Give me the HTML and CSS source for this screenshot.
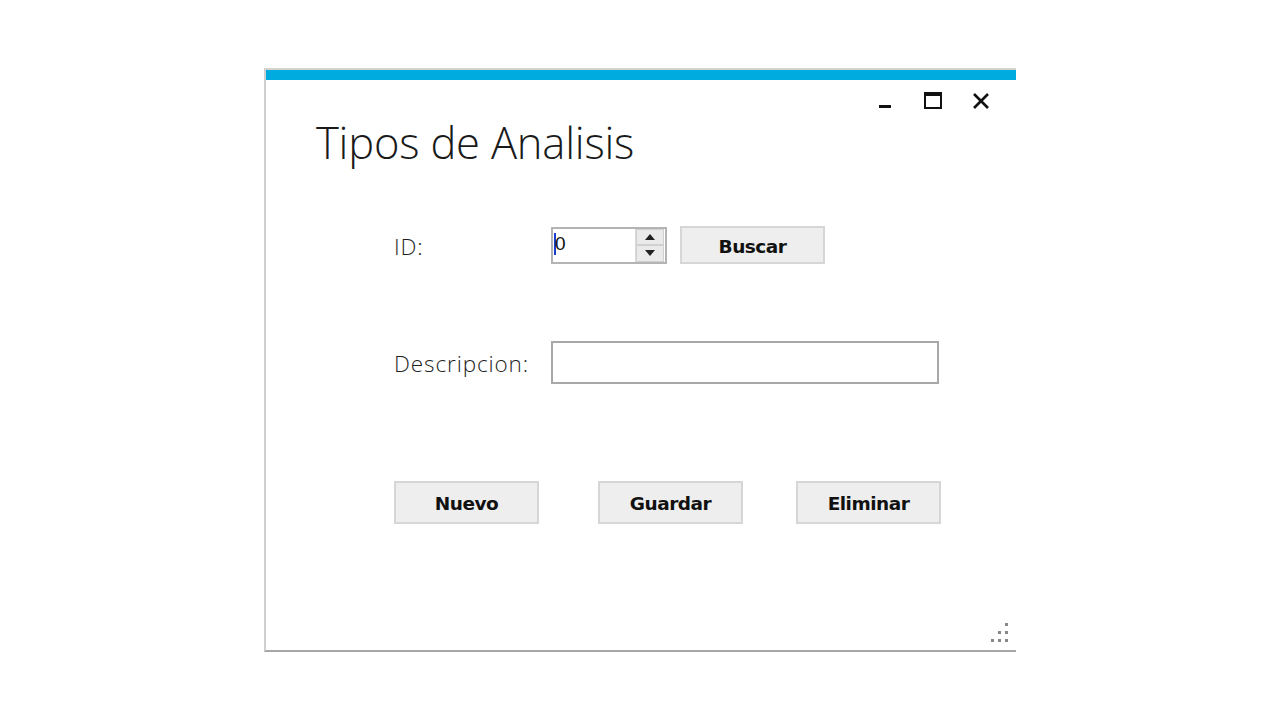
FILE: index.html
```html
<!DOCTYPE html>
<html lang="es">
<head>
<meta charset="utf-8">
<title>Tipos de Analisis</title>
<link rel="stylesheet" href="styles.css">
</head>
<body>
<div class="window">
  <div class="accent"></div>
  <div class="controls">
    <span class="ctl ctl-min"><svg width="14" height="18" viewBox="0 0 14 18"><rect x="1" y="13" width="12" height="3" fill="#111"/></svg></span>
    <span class="ctl ctl-max"><svg width="18" height="18" viewBox="0 0 18 18"><rect x="1" y="1" width="16" height="15" fill="none" stroke="#111" stroke-width="2"/><rect x="1" y="1" width="16" height="3" fill="#111"/></svg></span>
    <span class="ctl ctl-close"><svg width="18" height="18" viewBox="0 0 18 18"><path d="M2 2 L16 16 M16 2 L2 16" stroke="#111" stroke-width="2.6" fill="none"/></svg></span>
  </div>
  <h1 class="title">Tipos de Analisis</h1>
  <div class="form">
    <div class="row row-id">
      <label class="label">ID:</label>
      <div class="spin">
        <div class="spin-text"><span class="caret"></span>0</div>
        <div class="spin-btns">
          <div class="spin-btn"><svg width="10" height="6" viewBox="0 0 10 6"><path d="M0 6 L5 0 L10 6Z" fill="#222"/></svg></div>
          <div class="spin-btn"><svg width="10" height="6" viewBox="0 0 10 6"><path d="M0 0 L5 6 L10 0Z" fill="#222"/></svg></div>
        </div>
      </div>
      <button class="btn btn-buscar">Buscar</button>
    </div>
    <div class="row row-desc">
      <label class="label">Descripcion:</label>
      <div class="textbox"></div>
    </div>
    <div class="row row-actions">
      <button class="btn btn-act">Nuevo</button>
      <button class="btn btn-act">Guardar</button>
      <button class="btn btn-act">Eliminar</button>
    </div>
  </div>
  <div class="footer">
    <svg class="grip" width="18" height="19" viewBox="0 0 18 19">
      <rect x="14" y="0" width="3" height="3" fill="#888"/>
      <rect x="7" y="8" width="3" height="3" fill="#888"/>
      <rect x="14" y="8" width="3" height="3" fill="#888"/>
      <rect x="0" y="16" width="3" height="3" fill="#888"/>
      <rect x="7" y="16" width="3" height="3" fill="#888"/>
      <rect x="14" y="16" width="3" height="3" fill="#888"/>
    </svg>
  </div>
</div>
</body>
</html>
```
FILE: styles.css
```css
html, body {
  margin: 0;
  padding: 0;
  background: #ffffff;
}
body {
  width: 1280px;
  height: 720px;
  overflow: hidden;
  font-family: "Open Sans", "Noto Sans", sans-serif;
}
.window {
  margin: 68px 0 0 264px;
  width: 752px;
  height: 584px;
  box-sizing: border-box;
  border-top: 2px solid #d6d2d0;
  border-left: 2px solid #cfcfcf;
  border-bottom: 2px solid #a6a6a6;
  background: #ffffff;
  display: flex;
  flex-direction: column;
}
.accent {
  height: 10px;
  background: #00abdf;
  flex: none;
}
.controls {
  height: 30px;
  display: flex;
  justify-content: flex-end;
  align-items: flex-end;
  gap: 30px;
  padding-right: 26px;
  flex: none;
}
.ctl {
  display: flex;
  align-items: flex-end;
  height: 18px;
}
.ctl svg { display: block; }
.ctl-min { margin-right: 2px; }
.title {
  margin: 3px 0 0 50px;
  font-weight: 300;
  font-size: 43.5px;
  line-height: 60px;
  color: #1a1a1a;
  letter-spacing: -0.2px;
}
.form {
  padding-left: 128px;
  display: flex;
  flex-direction: column;
}
.row {
  display: flex;
  align-items: center;
}
.row-id { margin-top: 53px; height: 38px; }
.row-desc { margin-top: 77px; height: 43px; }
.row-actions { margin-top: 97px; height: 43px; }
.label {
  width: 157px;
  font-size: 22.5px;
  font-weight: 300;
  color: #1e1e1e;
  letter-spacing: 0.9px;
  margin-top: 2px;
}
.spin {
  width: 116px;
  height: 37px;
  box-sizing: border-box;
  border: 2px solid #b4b4b4;
  display: flex;
  background: #fff;
}
.spin-text {
  flex: 1;
  font-family: "Liberation Sans", Arial, sans-serif;
  font-size: 19px;
  line-height: 22px;
  padding: 4px 0 0 1px;
  color: #111;
  display: flex;
  align-items: flex-start;
}
.caret {
  width: 2px;
  height: 22px;
  background: #1a3fd0;
  margin-right: -1px;
}
.spin-btns {
  width: 28px;
  display: flex;
  flex-direction: column;
  margin: 0 1px 0 0;
  border-left: 1px solid #dadada;
}
.spin-btn {
  flex: 1;
  display: flex;
  align-items: center;
  justify-content: center;
  background: #eaeaea;
  border: 1px solid #d0d0d0;
}
.btn {
  box-sizing: border-box;
  height: 38px;
  width: 145px;
  background: #eeeeee;
  border: 2px solid #d6d6d6;
  font-family: "DejaVu Sans", "Liberation Sans", sans-serif;
  font-weight: bold;
  font-size: 18.5px;
  color: #111;
  padding: 3px 0 0 0;
  letter-spacing: -0.5px;
}
.btn-buscar { margin-left: 13px; }
.textbox {
  width: 388px;
  height: 43px;
  box-sizing: border-box;
  border: 2px solid #a8a8a8;
  background: #fff;
}
.btn-act {
  height: 43px;
  width: 145px;
  padding-top: 2px;
}
.btn-act:nth-child(2) { margin-left: 59px; }
.btn-act:nth-child(3) { margin-left: 53px; }
.footer {
  flex: 1;
  display: flex;
  justify-content: flex-end;
  align-items: flex-end;
  padding: 0 7px 8px 0;
}
.grip { display: block; }
```
